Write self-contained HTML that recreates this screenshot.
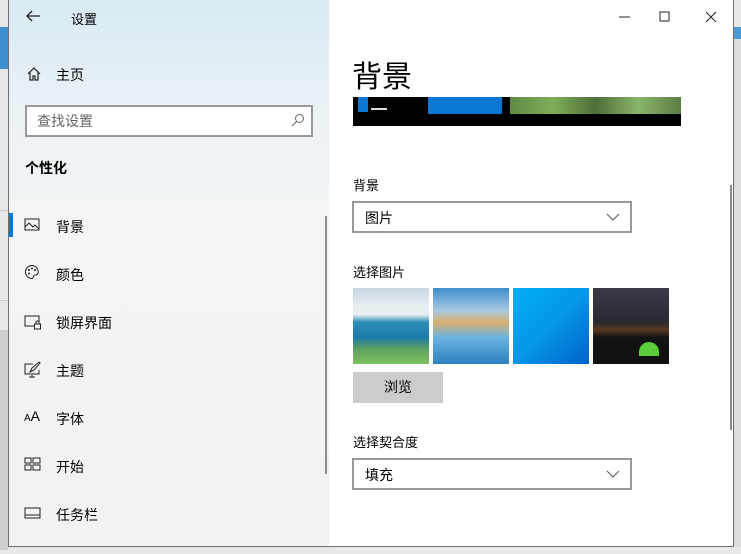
<!DOCTYPE html>
<html><head><meta charset="utf-8"><style>
*{margin:0;padding:0;box-sizing:border-box}
body{width:741px;height:554px;overflow:hidden;background:#e8e8e8;position:relative;font-family:"Liberation Sans","Noto Sans CJK SC",sans-serif;color:#000}
.a{position:absolute}
#win{left:8px;top:0;width:726px;height:547px;border:1px solid #6f6f6f;border-top:none;background:#fff;overflow:hidden}
#left{left:0;top:0;width:320px;height:547px;background:linear-gradient(180deg,#d9e9f2 0%,#eaf2f6 20%,#f3f4f5 40%,#f2f2f2 100%)}
.nav{position:absolute;left:47px;font-size:14px}
.ic{position:absolute;left:15px}
.t{font-size:14px}
.dd{position:absolute;left:343px;width:280px;height:32px;border:2px solid #999;background:#fff;font-size:14px;padding:5px 0 0 11px}
.dd svg{position:absolute;right:10px;top:10px}
</style></head><body>
<div class="a" style="left:0;top:27px;width:8px;height:42px;background:#3f8fcf"></div>
<div class="a" style="left:0;top:210px;width:8px;height:1px;background:#ccc"></div>
<div class="a" style="left:0;top:300px;width:8px;height:1px;background:#ccc"></div>
<div class="a" style="left:0;top:330px;width:8px;height:220px;background:#cfcfcf"></div>
<div class="a" style="left:734px;top:27px;width:7px;height:520px;background:#ddd"></div>
<div class="a" style="left:734px;top:27px;width:7px;height:12px;background:#4a9ad6"></div>
<div id="win" class="a">
 <div id="left" class="a">
  <svg class="a" style="left:16px;top:9px" width="16" height="14"><path d="M15 7H2M7 2L2 7l5 5" stroke="#222" stroke-width="1.3" fill="none"/></svg>
  <div class="a" style="left:62px;top:9px;font-size:13px">设置</div>
  <svg class="a" style="left:17px;top:66px" width="16" height="16"><path d="M2 8L8 2l6 6M4 6v8h3v-4h2v4h3V6" stroke="#222" stroke-width="1.2" fill="none"/></svg>
  <div class="nav" style="top:65px">主页</div>
  <div class="a" style="left:16px;top:105px;width:288px;height:32px;border:2px solid #999;background:#fff"></div>
  <div class="a" style="left:28px;top:111px;font-size:14px;color:#666">查找设置</div>
  <svg class="a" style="left:282px;top:113px" width="14" height="14"><circle cx="8.5" cy="5.5" r="4" stroke="#666" fill="none"/><path d="M5.5 8.5L1 13" stroke="#666"/></svg>
  <div class="a" style="left:16px;top:158px;font-size:14px;font-weight:bold">个性化</div>
  <div class="a" style="left:0;top:213px;width:4px;height:24px;background:#0078d7"></div>
  <svg class="ic" style="top:218px" width="16" height="14"><rect x="1" y="1" width="14" height="11" stroke="#222" fill="none"/><path d="M1 9l4-4 4 4 2-2 4 4" stroke="#222" fill="none"/></svg>
  <div class="nav" style="top:217px">背景</div>
  <svg class="ic" style="top:264px" width="16" height="16"><path d="M8 1.5a6.5 6.5 0 1 0 0 13c1.5 0 1-2 2-3s3 0 4-2A6.5 6.5 0 0 0 8 1.5z" stroke="#222" fill="none"/><circle cx="5" cy="6" r="1" fill="#222"/><circle cx="8" cy="4.5" r="1" fill="#222"/><circle cx="11" cy="6" r="1" fill="#222"/><circle cx="5" cy="9.5" r="1" fill="#222"/></svg>
  <div class="nav" style="top:265px">颜色</div>
  <svg class="ic" style="top:314px" width="18" height="16"><path d="M11 12H1V2h14v6" stroke="#222" fill="none"/><rect x="10.5" y="10" width="6" height="5" stroke="#222" fill="none"/><path d="M12 10V8.5a1.5 1.5 0 0 1 3 0V10" stroke="#222" fill="none"/></svg>
  <div class="nav" style="top:313px">锁屏界面</div>
  <svg class="ic" style="top:361px" width="18" height="17"><path d="M9 3H1v10h14V9" stroke="#222" fill="none"/><path d="M8 14v2M5 16h6M6 11l2-4 7-6 1 1-6 7z" stroke="#222" fill="none"/></svg>
  <div class="nav" style="top:361px">主题</div>
  <div class="a" style="left:15px;top:408px;font-size:10px">A<span style="font-size:14px">A</span></div>
  <div class="nav" style="top:409px">字体</div>
  <svg class="ic" style="top:457px" width="18" height="14"><rect x="1" y="1" width="6" height="5" stroke="#222" fill="none"/><rect x="9" y="1" width="7" height="5" stroke="#222" fill="none"/><rect x="1" y="8" width="6" height="5" stroke="#222" fill="none"/><rect x="9" y="8" width="7" height="5" stroke="#222" fill="none"/></svg>
  <div class="nav" style="top:457px">开始</div>
  <svg class="ic" style="top:507px" width="18" height="12"><rect x="1" y="1" width="15" height="10" stroke="#222" fill="none"/><path d="M1 8h15" stroke="#222"/></svg>
  <div class="nav" style="top:505px">任务栏</div>
  <div class="a" style="left:316px;top:216px;width:2px;height:258px;background:#8a8a8a"></div>
 </div>
 <svg class="a" style="left:610px;top:16px" width="12" height="2"><path d="M0 1h11" stroke="#222"/></svg>
 <svg class="a" style="left:650px;top:11px" width="12" height="12"><rect x="1" y="1" width="9" height="9" stroke="#222" fill="none"/></svg>
 <svg class="a" style="left:696px;top:11px" width="12" height="12"><path d="M1 1l10 10M11 1L1 11" stroke="#222"/></svg>
 <div class="a" style="left:343px;top:52px;font-size:30px">背景</div>
 <div class="a" style="left:344px;top:97px;width:328px;height:29px;background:#000"></div>
 <div class="a" style="left:349px;top:97px;width:10px;height:15px;background:#0a78d4"></div>
 <div class="a" style="left:362px;top:108px;width:16px;height:2px;background:#ddd"></div>
 <div class="a" style="left:419px;top:97px;width:74px;height:17px;background:#0a78d4"></div>
 <div class="a" style="left:501px;top:97px;width:171px;height:17px;background:linear-gradient(90deg,#5f8a45,#7fae5a,#4e6f3a,#8ab46a,#5b7f44)"></div>
 <div class="a" style="left:344px;top:175px;font-size:13px">背景</div>
 <div class="dd" style="top:201px">图片<svg width="14" height="8"><path d="M1 1l6 6 6-6" stroke="#555" fill="none"/></svg></div>
 <div class="a" style="left:344px;top:262px;font-size:13px">选择图片</div>
 <div class="a" style="left:344px;top:288px;width:76px;height:76px;background:linear-gradient(180deg,#c9d6e2 0%,#e8eef2 25%,#e6eef2 35%,#2d8fb8 45%,#1c7aa8 65%,#5ca060 80%,#80c060 100%)"></div>
 <div class="a" style="left:424px;top:288px;width:76px;height:76px;background:linear-gradient(180deg,#3f8ed0 0%,#a9c9e0 30%,#d8b070 45%,#6ab4e0 65%,#2e80c0 100%)"></div>
 <div class="a" style="left:504px;top:288px;width:76px;height:76px;background:linear-gradient(135deg,#00b0f5 0%,#0596e8 50%,#0062c8 100%)"></div>
 <div class="a" style="left:584px;top:288px;width:76px;height:76px;background:linear-gradient(180deg,#3a3a48 0%,#2a2830 45%,#5a3a20 55%,#141414 65%,#101010 100%)"></div>
 <div class="a" style="left:630px;top:342px;width:20px;height:14px;background:#5bcc3a;border-radius:10px 10px 0 0"></div>
 <div class="a" style="left:344px;top:372px;width:90px;height:31px;background:#ccc;font-size:14px;text-align:center;line-height:31px">浏览</div>
 <div class="a" style="left:344px;top:432px;font-size:13px">选择契合度</div>
 <div class="dd" style="top:458px">填充<svg width="14" height="8"><path d="M1 1l6 6 6-6" stroke="#555" fill="none"/></svg></div>
 <div class="a" style="left:721px;top:185px;width:2px;height:245px;background:#8a8a8a"></div>
</div>
</body></html>
